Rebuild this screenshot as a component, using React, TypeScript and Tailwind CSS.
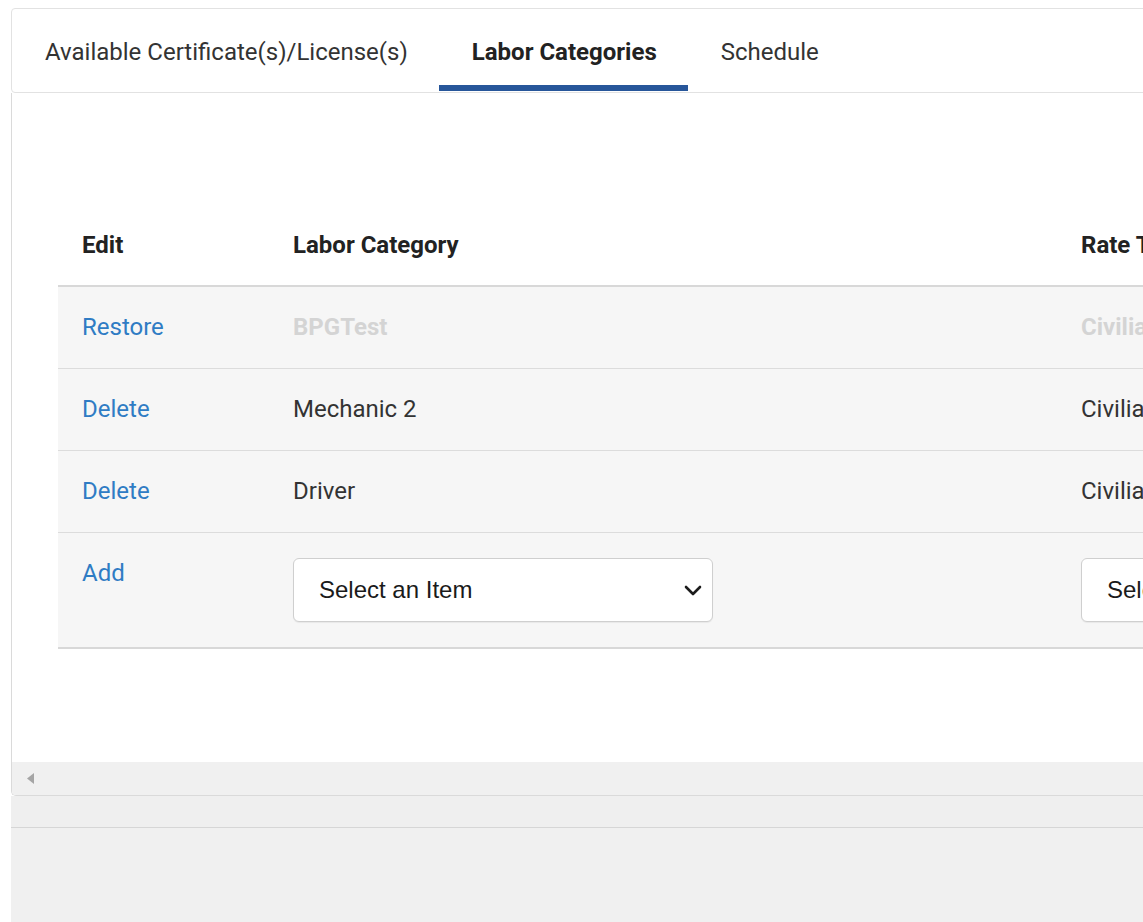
const tabs = [
  { label: "Available Certificate(s)/License(s)", active: false },
  { label: "Labor Categories", active: true },
  { label: "Schedule", active: false },
];

const rows = [
  { action: "Restore", category: "BPGTest", rate: "Civilian", removed: true },
  { action: "Delete", category: "Mechanic 2", rate: "Civilian", removed: false },
  { action: "Delete", category: "Driver", rate: "Civilian", removed: false },
];

function SelectBox({ width }: { width: string }) {
  return (
    <div
      className={`${width} h-[64px] flex items-center justify-between pl-[25px] pr-[10px] bg-white border border-[#cfcfcf] rounded-[6px] shadow-[0_1px_1px_rgba(0,0,0,0.06)]`}
    >
      <span className="font-['Liberation_Sans',Arial,sans-serif] text-[24px] text-[#1a1a1a] whitespace-nowrap">
        Select an Item
      </span>
      <svg width="18" height="11" viewBox="0 0 18 11">
        <polyline
          points="2,2 9,9 16,2"
          fill="none"
          stroke="#1c1c1c"
          strokeWidth="2.6"
          strokeLinecap="round"
          strokeLinejoin="round"
        />
      </svg>
    </div>
  );
}

export default function App() {
  return (
    <div className="w-[1143px] h-[922px] overflow-hidden bg-white pl-[11px] pt-[8px] font-['Roboto',sans-serif]">
      <div className="w-[1400px] h-full flex flex-col bg-[#f0f0f0]">
        <div className="bg-white">
          {/* tab strip */}
          <div className="h-[85px] flex border border-[#e2e2e2] rounded-[4px]">
            {tabs.map((tab) => (
              <div
                key={tab.label}
                className={
                  tab.active
                    ? "h-[82px] pl-[33px] pr-[31px] flex items-center border-b-[6px] border-[#27569a] pt-[10px] text-[24px] font-bold text-[#222]"
                    : "h-[82px] pl-[33px] pr-[31px] flex items-center pt-[4px] text-[24px] text-[#333]"
                }
              >
                {tab.label}
              </div>
            ))}
          </div>

          {/* labor categories grid */}
          <div className="h-[703px] flex flex-col border-l border-b border-[#dadada] rounded-bl-[5px] overflow-hidden">
            <div className="flex-1 pt-[111px] pl-[46px]">
              <div className="w-[1400px]">
                <div className="grid grid-cols-[211px_788px_1fr] h-[83px] items-center border-b-2 border-[#d8d8d8] text-[24px] font-bold text-[#222]">
                  <div className="pl-[24px]">Edit</div>
                  <div className="pl-[24px]">Labor Category</div>
                  <div className="pl-[24px]">Rate Type</div>
                </div>
                {rows.map((row, i) => (
                  <div
                    key={i}
                    className="grid grid-cols-[211px_788px_1fr] h-[82px] items-center pb-[1px] border-b border-[#dcdcdc] bg-[#f6f6f6] text-[24px]"
                  >
                    <div className="pl-[24px] text-[#2f7cc4]">{row.action}</div>
                    <div
                      className={
                        row.removed
                          ? "pl-[24px] font-bold text-[#d4d4d4]"
                          : "pl-[24px] text-[#333]"
                      }
                    >
                      {row.category}
                    </div>
                    <div
                      className={
                        row.removed
                          ? "pl-[24px] font-bold text-[#d4d4d4]"
                          : "pl-[24px] text-[#333]"
                      }
                    >
                      {row.rate}
                    </div>
                  </div>
                ))}
                <div className="grid grid-cols-[211px_788px_1fr] h-[116px] items-start pt-[25px] border-b-2 border-[#d8d8d8] bg-[#f6f6f6] text-[24px]">
                  <div className="pl-[24px] leading-[30px] text-[#2f7cc4]">Add</div>
                  <div className="pl-[24px]">
                    <SelectBox width="w-[420px]" />
                  </div>
                  <div className="pl-[24px]">
                    <SelectBox width="w-[300px]" />
                  </div>
                </div>
              </div>
            </div>

            {/* horizontal scroll track */}
            <div className="h-[33px] bg-[#f0f0f0] flex items-center pl-[15px]">
              <svg width="7" height="11" viewBox="0 0 7 11">
                <polygon points="7,0 7,11 0,5.5" fill="#a5a5a5" />
              </svg>
            </div>
          </div>
        </div>

        {/* footer band */}
        <div className="h-[32px] bg-[#efefef] border-b border-[#d6d6d6]" />
        <div className="flex-1 bg-[#f0f0f0]" />
      </div>
    </div>
  );
}
